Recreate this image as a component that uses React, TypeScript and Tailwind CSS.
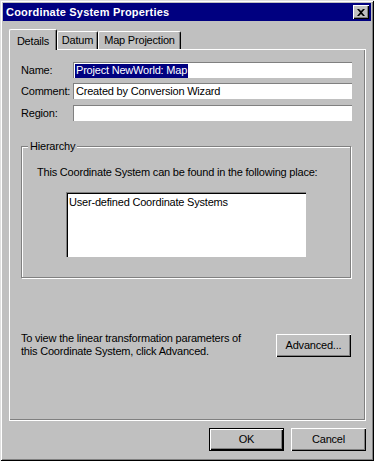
import React from "react"

const font = { fontFamily: '"Liberation Sans", Arial, sans-serif' }

function Button({ label, isDefault = false }: { label: string; isDefault?: boolean }) {
  return (
    <div className={isDefault ? "border border-black" : ""}>
      <div
        className={
          "flex items-center justify-center bg-[#c0c0c0] text-[11px] tracking-[-0.2px] text-black shadow-[inset_1px_1px_0_#fff,inset_-1px_-1px_0_#000,inset_-2px_-2px_0_#808080] " +
          (isDefault ? "w-[73px] h-[21px]" : "w-[75px] h-[23px]")
        }
      >
        {label}
      </div>
    </div>
  )
}

function Field({ label, children }: { label: string; children?: React.ReactNode }) {
  return (
    <div className="flex items-center h-[16px]">
      <div className="w-[52px] text-black">{label}</div>
      <div className="w-[279px] h-[16px] bg-white border-t border-l border-[#808080] flex items-center pl-px text-black whitespace-nowrap">
        {children}
      </div>
    </div>
  )
}

export default function App() {
  return (
    <div
      style={font}
      className="w-[374px] h-[461px] bg-[#c0c0c0] p-[3px] flex flex-col shadow-[inset_1px_1px_0_#dfdfdf,inset_-1px_-1px_0_#000,inset_2px_2px_0_#fff,inset_-2px_-2px_0_#808080]"
    >
      {/* title bar */}
      <div className="h-[18px] bg-[#000080] flex items-center justify-between pl-[3px] pr-[2px]">
        <span className="text-white font-bold text-[11px] tracking-[0.2px]">Coordinate System Properties</span>
        <div className="w-[16px] h-[14px] bg-[#c0c0c0] flex items-center justify-center shadow-[inset_1px_1px_0_#fff,inset_-1px_-1px_0_#000,inset_-2px_-2px_0_#808080]">
          <svg width="8" height="7" viewBox="0 0 8 7">
            <path d="M0 0h2l2 2 2-2h2L5 3.5 8 7H6L4 5 2 7H0l3-3.5z" fill="#000" />
          </svg>
        </div>
      </div>

      {/* tabs */}
      <div className="mt-[8px] ml-[6px] flex items-end h-[20px] text-[11px] tracking-[-0.2px] text-black">
        <div className="relative z-10 -mb-px w-[48px] h-[21px] bg-[#c0c0c0] border-t border-l border-white border-r border-r-black rounded-t-[2px] shadow-[inset_-1px_0_0_#808080] flex items-start justify-center pt-[3px]">
          Details
        </div>
        <div className="w-[41px] h-[18px] border-t border-l border-white border-r border-r-black rounded-t-[2px] shadow-[inset_-1px_0_0_#808080] flex items-center justify-center">
          Datum
        </div>
        <div className="w-[83px] h-[18px] border-t border-l border-white border-r border-r-black rounded-t-[2px] shadow-[inset_-1px_0_0_#808080] flex items-center justify-center">
          Map Projection
        </div>
      </div>

      {/* panel */}
      <div className="ml-[6px] w-[357px] h-[372px] border-t border-l border-white border-r border-b border-black shadow-[inset_-1px_-1px_0_#808080] pl-[11px] pt-[12px] flex flex-col text-[11px] tracking-[-0.2px] text-black">
        <Field label="Name:">
          <span className="bg-[#000080] text-white h-[14px] flex items-center pl-px pr-px">Project NewWorld: Map</span>
        </Field>
        <div className="mt-[5px]">
          <Field label="Comment:">
            <span className="pl-px">Created by Conversion Wizard</span>
          </Field>
        </div>
        <div className="mt-[6px]">
          <Field label="Region:" />
        </div>

        <div className="relative mt-[25px] w-[330px] h-[132px] border border-[#808080] shadow-[1px_1px_0_#fff,inset_1px_1px_0_#fff] pt-[19px] pl-[15px]">
          <span className="absolute -top-[7px] left-[6px] bg-[#c0c0c0] px-[2px] leading-[13px]">Hierarchy</span>
          <div className="leading-[13px]">This Coordinate System can be found in the following place:</div>
          <div className="mt-[13px] ml-[29px] w-[240px] h-[65px] bg-white border-t border-l border-[#808080] shadow-[inset_1px_1px_0_#000] pl-[2px] pt-[3px] leading-[13px]">
            User-defined Coordinate Systems
          </div>
        </div>

        <div className="mt-[54px] w-[330px] flex items-center justify-between">
          <div className="leading-[13px]">
            <div>To view the linear transformation parameters of</div>
            <div>this Coordinate System, click Advanced.</div>
          </div>
          <Button label="Advanced..." />
        </div>
      </div>

      {/* dialog buttons */}
      <div className="mt-[7px] ml-[6px] w-[357px] flex justify-end gap-[7px]">
        <Button label="OK" isDefault />
        <Button label="Cancel" />
      </div>
    </div>
  )
}
